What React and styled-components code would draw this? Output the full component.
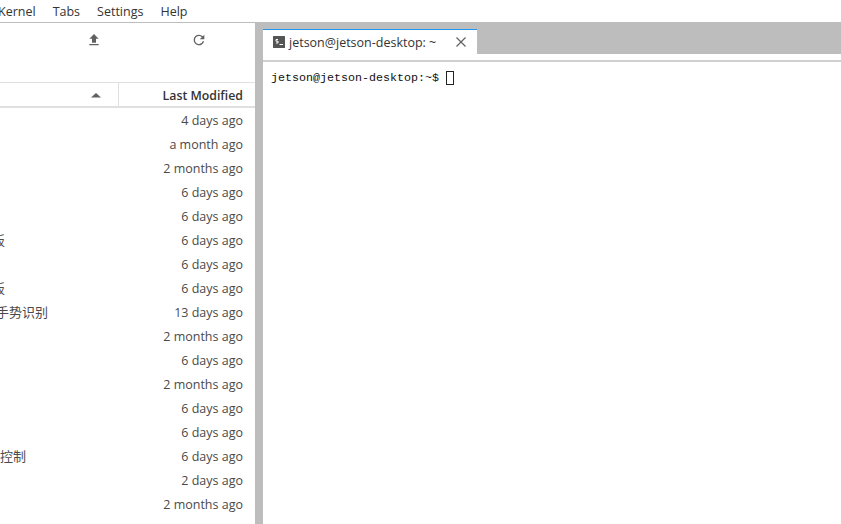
import React from "react";
import styled, { createGlobalStyle } from "styled-components";

const GlobalStyle = createGlobalStyle`
  html, body {
    margin: 0;
    padding: 0;
    height: 100%;
    background: #fff;
    overflow: hidden;
  }
  body {
    font-family: "Open Sans", "Noto Sans CJK SC", sans-serif;
    color: #3a3a3a;
  }
`;

const Page = styled.div`
  width: 841px;
  height: 524px;
  display: flex;
  flex-direction: column;
  overflow: hidden;
`;

const MenuBar = styled.div`
  height: 22px;
  flex: none;
  display: flex;
  align-items: center;
  column-gap: 17px;
  margin-left: -2px;
  font-size: 12.5px;
  color: #333;
  border-bottom: 1px solid #bdbdbd;
`;

const Main = styled.div`
  flex: 1;
  display: flex;
  min-height: 0;
`;

const FilePanel = styled.div`
  width: 255px;
  flex: none;
  display: flex;
  flex-direction: column;
`;

const Toolbar = styled.div`
  height: 60px;
  flex: none;
  display: grid;
  grid-template-columns: 105px 1fr;
  align-items: start;
  justify-items: start;
  padding-top: 9px;
  box-sizing: border-box;
  padding-left: 86px;
  border-bottom: 1px solid #e0e0e0;
`;

const ToolIcon = styled.svg`
  width: 16px;
  height: 16px;
  fill: #616161;
`;

const Header = styled.div`
  height: 23px;
  flex: none;
  display: flex;
  border-bottom: 2px solid #e0e0e0;
  font-size: 12.5px;
  color: #333;
`;

const SortCell = styled.div`
  width: 119px;
  flex: none;
  box-sizing: border-box;
  border-right: 1px solid #e0e0e0;
  display: flex;
  align-items: center;
  justify-content: flex-end;
  padding-right: 16px;
`;

const Caret = styled.svg`
  width: 12px;
  height: 12px;
  fill: #616161;
`;

const ModifiedCell = styled.div`
  flex: 1;
  display: flex;
  align-items: center;
  justify-content: flex-end;
  padding: 1px 12px 0 0;
  font-size: 12.3px;
  font-weight: 600;
`;

const Row = styled.div`
  height: 24px;
  flex: none;
  display: flex;
  align-items: center;
  justify-content: space-between;
  padding-right: 12px;
  font-size: 12.5px;
  color: #4a4a4a;
  overflow: hidden;
`;

const Name = styled.div`
  width: ${(p) => p.$end}px;
  display: flex;
  justify-content: flex-end;
  white-space: nowrap;
  font-size: 13px;
  margin-top: -2px;
`;

const Modified = styled.div`
  white-space: nowrap;
`;

const Splitter = styled.div`
  width: 8px;
  flex: none;
  background: #bdbdbd;
`;

const TerminalArea = styled.div`
  flex: 1;
  display: flex;
  flex-direction: column;
  min-width: 0;
`;

const TabBar = styled.div`
  height: 31px;
  flex: none;
  background: #bdbdbd;
  display: flex;
  align-items: flex-end;
`;

const Tab = styled.div`
  width: 214px;
  height: 25px;
  background: #fff;
  border-top: 1px solid #2196f3;
  box-sizing: border-box;
  display: flex;
  align-items: center;
  padding: 0 10px;
  font-size: 12.5px;
  color: #333;
`;

const TermIcon = styled.svg`
  width: 12px;
  height: 12px;
  flex: none;
  margin-right: 4px;
`;

const TabTitle = styled.span`
  flex: 1;
  white-space: nowrap;
`;

const CloseIcon = styled.svg`
  width: 12px;
  height: 12px;
  flex: none;
  stroke: #616161;
  stroke-width: 1.2;
  fill: none;
`;

const TabGap = styled.div`
  height: 8px;
  flex: none;
  border-bottom: 2px solid #d0d0d0;
  box-sizing: border-box;
`;

const Terminal = styled.div`
  flex: none;
  height: 16px;
  padding: 8px 8px 0;
  display: flex;
  align-items: center;
  white-space: pre;
  font-family: "Liberation Mono", monospace;
  font-size: 11.67px;
  color: #111;
`;

const Cursor = styled.span`
  display: inline-block;
  width: 6px;
  height: 12px;
  border: 1px solid #222;
  margin-left: 7px;
`;

const rows = [
  ["4 days ago"],
  ["a month ago"],
  ["2 months ago"],
  ["6 days ago"],
  ["6 days ago"],
  ["6 days ago", "板", 5],
  ["6 days ago"],
  ["6 days ago", "板", 5],
  ["13 days ago", "手势识别", 48],
  ["2 months ago"],
  ["6 days ago"],
  ["2 months ago"],
  ["6 days ago"],
  ["6 days ago"],
  ["6 days ago", "控制", 26],
  ["2 days ago"],
  ["2 months ago"],
];

export default function App() {
  return (
    <Page>
      <GlobalStyle />
      <MenuBar>
        <span>Kernel</span>
        <span>Tabs</span>
        <span>Settings</span>
        <span>Help</span>
      </MenuBar>
      <Main>
        <FilePanel>
          <Toolbar>
            <ToolIcon viewBox="0 0 24 24">
              <path d="M9 16h6v-6h4l-7-7-7 7h4zm-4 2h14v2H5z" />
            </ToolIcon>
            <ToolIcon viewBox="0 0 24 24">
              <path d="M17.65 6.35A7.96 7.96 0 0 0 12 4a8 8 0 1 0 7.74 10h-2.08A6 6 0 1 1 12 6c1.66 0 3.14.69 4.22 1.78L13 11h7V4z" />
            </ToolIcon>
          </Toolbar>
          <Header>
            <SortCell>
              <Caret viewBox="0 0 12 12">
                <path d="M1 8.5 6 4l5 4.5z" />
              </Caret>
            </SortCell>
            <ModifiedCell>Last Modified</ModifiedCell>
          </Header>
          {rows.map(([date, name, end], i) => (
            <Row key={i}>
              <Name $end={end || 0}>{name}</Name>
              <Modified>{date}</Modified>
            </Row>
          ))}
        </FilePanel>
        <Splitter />
        <TerminalArea>
          <TabBar>
            <Tab>
              <TermIcon viewBox="0 0 12 12">
                <rect width="12" height="12" rx="0.5" fill="#555" />
                <path d="M5 3.5H3v1.7h2V7H3M6.5 8.5H10" stroke="#fff" strokeWidth="1" fill="none" />
              </TermIcon>
              <TabTitle>jetson@jetson-desktop: ~</TabTitle>
              <CloseIcon viewBox="0 0 12 12">
                <path d="M1.5 1.5l9 9M10.5 1.5l-9 9" />
              </CloseIcon>
            </Tab>
          </TabBar>
          <TabGap />
          <Terminal>
            jetson@jetson-desktop:~$
            <Cursor />
          </Terminal>
        </TerminalArea>
      </Main>
    </Page>
  );
}
